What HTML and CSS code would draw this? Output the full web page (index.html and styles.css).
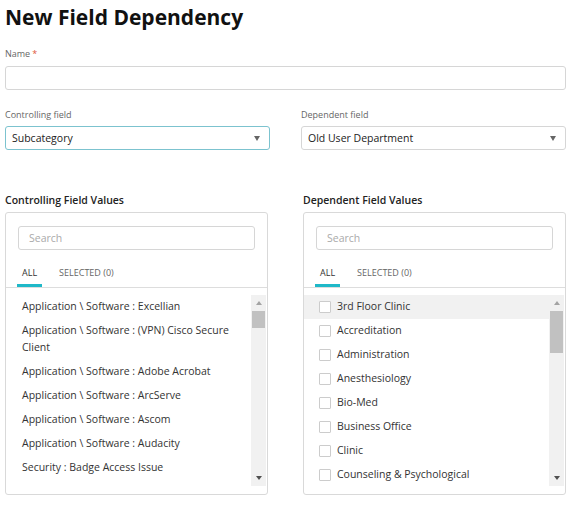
FILE: index.html
```html
<!DOCTYPE html>
<html lang="en">

<head>
    <meta charset="UTF-8">
    <meta name="viewport" content="width=device-width, initial-scale=1.0">
    <title>New Field Dependency</title>
    <link rel="stylesheet" href="styles.css">
</head>

<body>
    <div class="page">
        <h1 class="page-title">New Field Dependency</h1>

        <div class="field field-name">
            <label class="field-label">Name<span class="required">*</span></label>
            <input type="text" class="text-input">
        </div>

        <div class="field-row">
            <div class="field">
                <label class="field-label">Controlling field</label>
                <div class="select select-focus">
                    <span>Subcategory</span>
                    <span class="select-arrow"></span>
                </div>
            </div>
            <div class="field">
                <label class="field-label">Dependent field</label>
                <div class="select">
                    <span>Old User Department</span>
                    <span class="select-arrow"></span>
                </div>
            </div>
        </div>

        <div class="values-row">
            <div class="values">
                <div class="values-title">Controlling Field Values</div>
                <div class="values-box">
                    <input type="text" class="search-input" placeholder="Search">
                    <div class="tabs">
                        <a href="javascript:;" class="tab active">ALL</a>
                        <a href="javascript:;" class="tab">SELECTED (0)</a>
                    </div>
                    <div class="list">
                        <ul class="list-items">
                            <li>Application \ Software : Excellian</li>
                            <li>Application \ Software : (VPN) Cisco Secure Client</li>
                            <li>Application \ Software : Adobe Acrobat</li>
                            <li>Application \ Software : ArcServe</li>
                            <li>Application \ Software : Ascom</li>
                            <li>Application \ Software : Audacity</li>
                            <li>Security : Badge Access Issue</li>
                        </ul>
                        <div class="scrollbar">
                            <span class="sb-btn sb-up"></span>
                            <div class="sb-track"><div class="sb-thumb" style="height: 17px;"></div></div>
                            <span class="sb-btn sb-down"></span>
                        </div>
                    </div>
                </div>
            </div>

            <div class="values">
                <div class="values-title">Dependent Field Values</div>
                <div class="values-box">
                    <input type="text" class="search-input" placeholder="Search">
                    <div class="tabs">
                        <a href="javascript:;" class="tab active">ALL</a>
                        <a href="javascript:;" class="tab">SELECTED (0)</a>
                    </div>
                    <div class="list">
                        <ul class="list-items checks">
                            <li class="hover"><span class="check"></span>3rd Floor Clinic</li>
                            <li><span class="check"></span>Accreditation</li>
                            <li><span class="check"></span>Administration</li>
                            <li><span class="check"></span>Anesthesiology</li>
                            <li><span class="check"></span>Bio-Med</li>
                            <li><span class="check"></span>Business Office</li>
                            <li><span class="check"></span>Clinic</li>
                            <li><span class="check"></span>Counseling &amp; Psychological</li>
                        </ul>
                        <div class="scrollbar">
                            <span class="sb-btn sb-up"></span>
                            <div class="sb-track"><div class="sb-thumb" style="height: 42px;"></div></div>
                            <span class="sb-btn sb-down"></span>
                        </div>
                    </div>
                </div>
            </div>
        </div>
    </div>
</body>

</html>
```

FILE: styles.css
```css
* {
    box-sizing: border-box;
}

ul,
li,
div,
h1,
a {
    padding: 0px;
    margin: 0px;
}

body {
    margin: 0px;
    font-family: "Open Sans", "Liberation Sans", sans-serif;
    color: #333;
    background: #fff;
}

a {
    text-decoration: none;
}

.page {
    width: 561px;
    margin-left: 5px;
}

.page-title {
    margin-top: 2px;
    font-size: 21px;
    line-height: 30px;
    font-weight: 700;
    color: #111;
}

.field-name {
    margin-top: 15px;
}

.field-label {
    display: block;
    font-size: 9px;
    line-height: 14px;
    color: #666;
    margin-bottom: 5px;
}

.required {
    color: #e0573b;
    margin-left: 2px;
}

.text-input {
    display: block;
    width: 100%;
    height: 24px;
    border: 1px solid #d6d6d6;
    border-radius: 3px;
    outline: none;
}

.field-row {
    display: grid;
    grid-template-columns: 265px 265px;
    column-gap: 31px;
    margin-top: 18px;
}

.field-row .field-label {
    margin-bottom: 4px;
}

.select {
    display: flex;
    align-items: center;
    justify-content: space-between;
    height: 24px;
    padding: 0px 9px 1px 6px;
    border: 1px solid #d6d6d6;
    border-radius: 3px;
    font-size: 10.5px;
    color: #222;
}

.select-focus {
    border-color: #7cc3cf;
}

.select-arrow {
    width: 0px;
    height: 0px;
    margin-top: 1px;
    border-left: 3.5px solid transparent;
    border-right: 3.5px solid transparent;
    border-top: 5px solid #666;
}

.values-row {
    display: grid;
    grid-template-columns: 263px 263px;
    column-gap: 35px;
    margin-top: 43px;
}

.values-title {
    font-size: 10.5px;
    line-height: 14px;
    font-weight: 600;
    color: #222;
    margin-bottom: 5px;
}

.values-box {
    height: 283px;
    border: 1px solid #d9d9d9;
    border-radius: 3px;
    padding-top: 13px;
}

.search-input {
    display: block;
    width: 237px;
    height: 24px;
    margin: 0px auto;
    padding: 0px 10px;
    border: 1px solid #d6d6d6;
    border-radius: 3px;
    font-family: "Open Sans", "Liberation Sans", sans-serif;
    font-size: 10.5px;
    outline: none;
}

.search-input::placeholder {
    color: #aaa;
}

.tabs {
    display: flex;
    gap: 12px;
    margin-top: 12px;
    padding-left: 11px;
    border-bottom: 1px solid #ddd;
}

.tab {
    padding: 4px 5px 5px;
    font-size: 9px;
    line-height: 13px;
    color: #666;
    border-bottom: 3px solid transparent;
}

.tab.active {
    color: #333;
    border-bottom-color: #1fb8c8;
}

.list {
    display: flex;
    height: 191px;
    margin-top: 7px;
    padding-right: 1px;
}

.list-items {
    flex: 1;
    list-style: none;
    overflow: hidden;
}

.list-items li {
    padding: 3px 10px 4px 16px;
    font-size: 10.5px;
    line-height: 17px;
    color: #333;
}

.checks li {
    display: flex;
    align-items: center;
    padding-left: 15px;
}

.checks li.hover {
    background: #f1f1f1;
}

.check {
    width: 12px;
    height: 12px;
    margin-right: 6px;
    border: 1px solid #ccc;
    border-radius: 1px;
    background: #fff;
}

.scrollbar {
    display: flex;
    flex-direction: column;
    width: 15px;
    background: #f1f1f1;
}

.sb-btn {
    display: flex;
    justify-content: center;
    align-items: center;
    height: 16px;
}

.sb-btn::before {
    content: "";
    border-left: 3.5px solid transparent;
    border-right: 3.5px solid transparent;
}

.sb-up::before {
    border-bottom: 4px solid #a3a3a3;
}

.sb-down::before {
    border-top: 4px solid #505050;
}

.sb-track {
    flex: 1;
    padding: 0px 1px;
}

.sb-thumb {
    background: #c1c1c1;
}
```
